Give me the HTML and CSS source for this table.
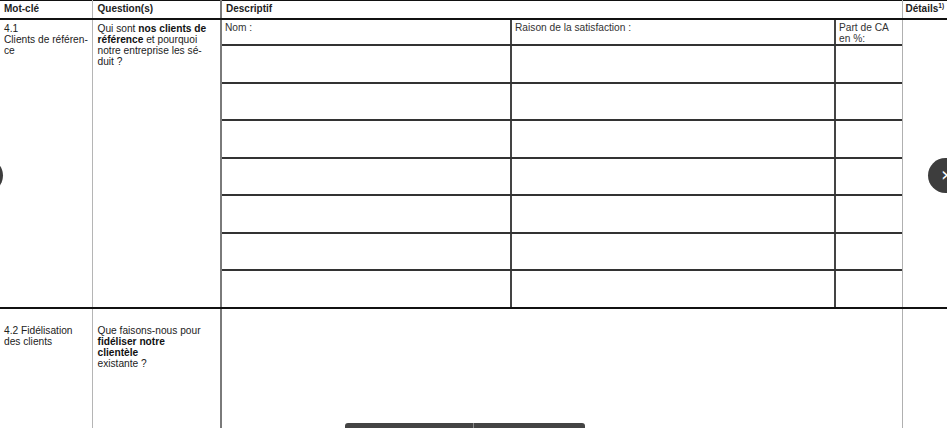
FILE: index.html
```html
<!DOCTYPE html>
<html lang="fr">
<head>
<meta charset="utf-8">
<title>Clients de référence</title>
<link rel="stylesheet" href="styles.css">
</head>
<body>
<table class="grid">
  <colgroup>
    <col class="c-key"><col class="c-q"><col class="c-desc"><col class="c-det">
  </colgroup>
  <tr class="head">
    <th class="cell key">Mot-clé</th>
    <th class="cell q">Question(s)</th>
    <th class="cell desc">Descriptif</th>
    <th class="cell det">Détails<sup>1)</sup></th>
  </tr>
  <tr class="row1">
    <td class="cell key">4.1<br>Clients de référen-<br>ce</td>
    <td class="cell q">Qui sont <b>nos clients de</b><br><b>référence</b> et pourquoi<br>notre entreprise les sé-<br>duit ?</td>
    <td class="cell desc nested">
      <table class="inner">
        <colgroup><col class="i-nom"><col class="i-rais"><col class="i-part"></colgroup>
        <tr class="lbl"><td>Nom :</td><td>Raison de la satisfaction :</td><td class="last">Part de CA<br>en %:</td></tr>
        <tr><td></td><td></td><td class="last"></td></tr>
        <tr><td></td><td></td><td class="last"></td></tr>
        <tr><td></td><td></td><td class="last"></td></tr>
        <tr><td></td><td></td><td class="last"></td></tr>
        <tr><td></td><td></td><td class="last"></td></tr>
        <tr><td></td><td></td><td class="last"></td></tr>
        <tr class="end"><td></td><td></td><td class="last"></td></tr>
      </table>
    </td>
    <td class="cell det"></td>
  </tr>
  <tr class="row2">
    <td class="cell key">4.2 Fidélisation<br>des clients</td>
    <td class="cell q">Que faisons-nous pour<br><b>fidéliser notre</b><br><b>clientèle</b><br>existante ?</td>
    <td class="cell desc"></td>
    <td class="cell det"></td>
  </tr>
</table>

<div class="nav nav-prev" aria-label="Précédent"></div>
<div class="nav nav-next" aria-label="Suivant"><span>›</span></div>
<div class="toolbar"><span class="tb-a"></span><span class="tb-b"></span></div>
</body>
</html>
```

FILE: styles.css
```css
html, body {
  margin: 0;
  padding: 0;
  background: #fff;
  overflow: hidden;
}
body {
  width: 947px;
  height: 428px;
  font-family: "Liberation Sans", Arial, sans-serif;
  font-size: 10.2px;
  line-height: 11px;
  color: #222;
  position: relative;
}
.grid {
  border-collapse: collapse;
  table-layout: fixed;
  width: 947px;
  border-top: 1px solid #111;
}
.c-key { width: 92px; }
.c-q { width: 129px; }
.c-desc { width: 681px; }
.c-det { width: 45px; }

.cell {
  vertical-align: top;
  padding: 0;
  text-align: left;
  white-space: nowrap;
}
.head .cell {
  height: 15px;
  font-weight: bold;
  font-size: 10px;
  padding: 2px 4px 0 4px;
  border-bottom: 2px solid #111;
  color: #222;
}
.head .cell.q { padding-left: 5px; }
.head .cell.det { padding-left: 3px; }
sup {
  font-size: 6.5px;
  line-height: 0;
  vertical-align: 4px;
}
.cell.key { border-right: 1px solid #b5b5b5; }
.cell.q { border-right: 2px solid #7a7a7a; }
.cell.det { border-left: 1px solid #b0b0b0; }

.row1 .cell.key, .row1 .cell.q {
  padding: 3px 3px 0 4px;
}
.row1 .cell.q { padding-left: 5px; }
.row1 > .cell { border-bottom: 2px solid #111; }
.row1 .cell.nested { padding: 0; }

.inner {
  border-collapse: collapse;
  table-layout: fixed;
  width: 681px;
}
.i-nom { width: 289px; }
.i-rais { width: 324px; }
.i-part { width: 68px; }
.inner td {
  height: 35.5px;
  padding: 0;
  border-right: 2px solid #444;
  border-bottom: 2px solid #333;
  vertical-align: top;
}
.inner td.last { border-right: none; }
.inner tr.lbl td {
  height: 22px;
  padding: 2px 3px 0 3px;
  color: #333;
}
.inner tr.end td { border-bottom: none; height: 36px; }

.row2 .cell { height: 110px; }
.row2 .cell.key, .row2 .cell.q {
  padding: 16px 3px 0 4px;
}
.row2 .cell.q { padding-left: 5px; }

b { font-weight: bold; color: #111; }

.nav {
  position: absolute;
  top: 158px;
  width: 35px;
  height: 35px;
  border-radius: 50%;
  background: #3d3d3d;
}
.nav-prev { left: -32px; }
.nav-next {
  left: 928px;
  color: #fff;
  font-size: 20px;
  line-height: 33px;
  font-family: "DejaVu Sans", sans-serif;
}
.nav-next span { display: block; padding-left: 13px; }
.toolbar {
  position: absolute;
  left: 345px;
  top: 423px;
  width: 240px;
  height: 8px;
  display: flex;
  border-radius: 3px 3px 0 0;
  overflow: hidden;
}
.tb-a { width: 128px; background: #444; border-right: 1px solid #8a8a8a; }
.tb-b { flex: 1; background: #444; }
```
